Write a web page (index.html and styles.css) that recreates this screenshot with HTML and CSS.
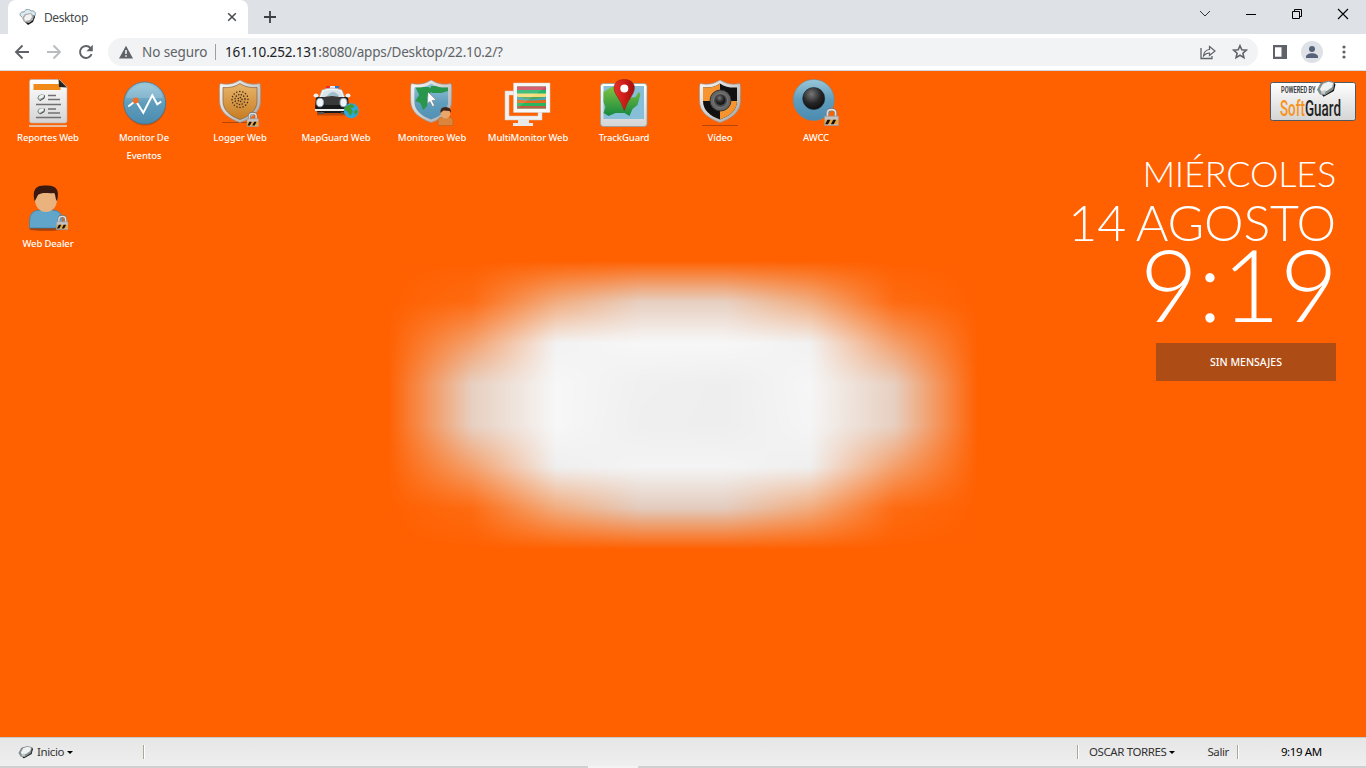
FILE: index.html
```html
<!DOCTYPE html>
<html lang="es">
<head>
<meta charset="utf-8">
<title>Desktop</title>
<link rel="stylesheet" href="styles.css">
</head>
<body>
<svg class="defs" width="0" height="0">
  <defs>
    <linearGradient id="steel" x1="0" y1="0" x2="1" y2="1"><stop offset="0" stop-color="#fafafa"/><stop offset=".5" stop-color="#cfcfcf"/><stop offset="1" stop-color="#a5a5a5"/></linearGradient>
    <linearGradient id="blue" x1="0" y1="0" x2="0" y2="1"><stop offset="0" stop-color="#9ac6d8"/><stop offset=".5" stop-color="#5f9dbc"/><stop offset="1" stop-color="#4b8bb0"/></linearGradient>
    <linearGradient id="amber" x1="0" y1="0" x2="0" y2="1"><stop offset="0" stop-color="#e8b56c"/><stop offset="1" stop-color="#c77c22"/></linearGradient>
    <linearGradient id="red" x1="0" y1="0" x2="1" y2="0"><stop offset="0" stop-color="#e5302a"/><stop offset=".5" stop-color="#cf1d18"/><stop offset="1" stop-color="#a00f0d"/></linearGradient>
    <linearGradient id="green" x1="0" y1="0" x2="0" y2="1"><stop offset="0" stop-color="#7dc142"/><stop offset="1" stop-color="#16893f"/></linearGradient>
    <linearGradient id="paper" x1="0" y1="0" x2="0" y2="1"><stop offset="0" stop-color="#fff"/><stop offset="1" stop-color="#d4d4d4"/></linearGradient>
    <radialGradient id="lens" cx=".4" cy=".3" r=".7"><stop offset="0" stop-color="#777"/><stop offset=".6" stop-color="#262626"/><stop offset="1" stop-color="#111"/></radialGradient>
    <clipPath id="inner"><path d="M30 5.500C25 9 19 10 13 9.500V23c0 9 7 15 17 18.500C40 38 47 32 47 23V9.500C41 10 35 9 30 5.500Z"/></clipPath>
    <symbol id="shield" viewBox="0 0 60 50">
      <path d="M30 2C24 6 17 7 10.500 5.500 9 6 9.500 15 9.500 23c0 11 9 17.500 20.500 21.500C41.500 40.500 50.500 34 50.500 23c0-8 .5-17-1-17.500C43 7 36 6 30 2Z" fill="url(#steel)" stroke="#929292" stroke-width=".7"/>
    </symbol>
    <symbol id="lock" viewBox="0 0 13 16">
      <path d="M3 8V4.500C3 .5 10 .5 10 4.500V8" fill="none" stroke="#777" stroke-width="2.700"/><path d="M3 8V4.500C3 1 10 1 10 4.500V8" fill="none" stroke="#ddd" stroke-width="1.500"/>
      <path d="M.5 7.500h12v8H.5z" fill="#c4c4c4" stroke="#999" stroke-width=".6"/><path d="M1 10.500h11v4H1z" fill="#e7a43c"/><path d="m1 14.500 2-4h2.500l-2 4Zm5 0 2-4h2.500l-2 4Z" fill="#111"/>
    </symbol>
    <symbol id="gem" viewBox="0 0 16 14">
      <path d="M4.500 12 6 13.800 14.500 9 15.800 4 15 2Z" fill="#111"/><path d="m.5 8 3-5.500L10 .5l5 1.500-1 6-7 4.500-4-.5Z" fill="#848f8f"/><path d="m3 7.500 2.500-4.500L10 1.500l4 1-1 3.500L8.500 9 4 9.500Z" fill="#eef2f1"/><path d="m4 9 4-.5-1 3-3-.3Z" fill="#c5cdcc"/>
    </symbol>
  </defs>
</svg>

<header class="browser">
  <div class="tabs">
    <div class="tab">
      <svg class="favicon" width="18" height="17" viewBox="0 0 18 17"><path d="M3 8C-1 6 2 2 5 3c2-4 6-3 7-1 4-1 6 3 3 6" fill="#dce9ef" stroke="#839baa"/><path d="m6 13 3 3 5-3 2-5-1-2Z" fill="#151515"/><path d="m3 9 3-4 6-1 3 3-1 4-4 3-5-1Z" fill="#aaa"/><path d="m5 9 2-3 5-1 1 3-2 3-5 1Z" fill="#f2f2f2"/></svg>
      <span class="tab-title">Desktop</span>
      <svg class="tab-close" width="10" height="10" viewBox="0 0 10 10"><path d="m1.200 1.200 7.600 7.600m0-7.600L1.200 8.800" stroke="#45494d" stroke-width="1.500"/></svg>
    </div>
    <svg class="plus" width="12" height="12" viewBox="0 0 12 12"><path d="M6 0v12M0 6h12" stroke="#3c4043" stroke-width="1.800"/></svg>
    <div class="window-buttons">
      <svg width="12" height="12" viewBox="0 0 12 12"><path d="m1 3 5 5 5-5" fill="none" stroke="#333"/></svg>
      <svg width="12" height="12" viewBox="0 0 12 12"><path d="M1 6.500h10" stroke="#000"/></svg>
      <svg width="12" height="12" viewBox="0 0 12 12"><path d="M1.500 3.500h7v7h-7zM3.500 3V1.500h7v7H9" fill="none" stroke="#000"/></svg>
      <svg width="12" height="12" viewBox="0 0 12 12"><path d="m1 1 10 10M11 1 1 11" stroke="#000" stroke-width="1.100"/></svg>
    </div>
  </div>
  <div class="toolbar">
    <div class="nav">
      <svg width="16" height="16" viewBox="0 0 16 16"><path d="M15 8H2m6.500-6.500L2 8l6.500 6.500" fill="none" stroke="#5f6368" stroke-width="1.900"/></svg>
      <svg width="16" height="16" viewBox="0 0 16 16"><path d="M1 8h13M7.500 1.500 14 8l-6.500 6.500" fill="none" stroke="#babcbe" stroke-width="1.900"/></svg>
      <svg width="16" height="16" viewBox="0 0 16 16"><path d="M13.600 10.200A6 6 0 1 1 12.500 4" fill="none" stroke="#5f6368" stroke-width="1.900"/><path d="M14.800.8v6.500H8.400Z" fill="#5f6368"/></svg>
    </div>
    <div class="omnibox">
      <svg width="14" height="14" viewBox="0 0 14 14"><path d="M7 .8 14 13.500H0Z" fill="#5f6368"/><path d="M6.200 5h1.600v4H6.200zm0 5.200h1.600v1.600H6.200z" fill="#f1f3f4"/></svg>
      <span class="warn">No seguro</span><i class="bar"></i>
      <span class="url">161.10.252.131<span class="path">:8080/apps/Desktop/22.10.2/?</span></span>
      <svg class="share" width="16" height="15" viewBox="0 0 16 15"><path d="M1 3v10.500h11V11" fill="none" stroke="#5f6368" stroke-width="1.300"/><path d="M9.500 1.500 15 6l-5.500 4.500V8C6.500 8 5 9 3.500 11c.3-3.500 2-6 6-6.500Z" fill="none" stroke="#5f6368" stroke-width="1.200"/></svg>
      <svg width="16" height="16" viewBox="0 0 16 16"><path d="m8 1.700 1.800 4.100 4.500.4-3.400 3 1 4.400L8 11.300l-3.900 2.300 1-4.400-3.400-3 4.500-.4Z" fill="none" stroke="#5f6368" stroke-width="1.600"/></svg>
    </div>
    <svg class="panel" width="14" height="14" viewBox="0 0 14 14"><path d="M0 0h14v14H0z" fill="#5f6368"/><path d="M2 2.300h6.500v9.400H2z" fill="#fff"/></svg>
    <svg class="avatar" width="22" height="22" viewBox="0 0 22 22"><circle cx="11" cy="11" r="11" fill="#dee1e6"/><circle cx="11" cy="8" r="3" fill="#56617a"/><path d="M5 16c0-5 12-5 12 0v1H5Z" fill="#56617a"/></svg>
    <svg width="4" height="14" viewBox="0 0 4 14"><g fill="#5f6368"><circle cx="2" cy="2" r="1.600"/><circle cx="2" cy="7" r="1.600"/><circle cx="2" cy="12" r="1.600"/></g></svg>
  </div>
</header>

<main class="desktop">
  <canvas class="wallpaper" id="wallpaper" width="592" height="290"></canvas>
  <section class="shortcuts">
    <div class="shortcut">
      <svg width="60" height="50" viewBox="0 0 60 50"><path d="M11 47h38v2H11z" fill="#ddd" opacity=".75"/><path d="M12.500 1.500h29L49 9v34q0 2-2 2H13.500q-2 0-2-2V3.500q0-2 2-2Z" fill="url(#paper)" stroke="#b3b3b3" stroke-width=".6"/><path d="M15.500 6h27v6h-27z" fill="#f28a19"/><path d="M40.500 1 49 9.500 41 9Z" fill="#222"/><path d="M18 26.500h25M18 39.500h25M30 17.500h8M30 21.500h12M30 31h8M30 35h12" stroke="#707070" stroke-width="1.500"/><use href="#gem" x="19" y="16" width="8" height="7"/><use href="#gem" x="19" y="29.500" width="8" height="7"/></svg>
      <span>Reportes Web</span>
    </div>
    <div class="shortcut">
      <svg width="60" height="50" viewBox="0 0 60 50"><circle cx="31" cy="26.500" r="21" fill="#8b4517" opacity=".5"/><circle cx="30.700" cy="25" r="21" fill="url(#blue)" stroke="#3a7799" stroke-width=".7"/><path d="M12 20C16 2 45 2 49 20" fill="#b9dbe7" opacity=".3"/><path d="m14.300 28.500 7.400-5.700 7.600 12 9-17.500 5 9 4-2.800" fill="none" stroke="#fff" stroke-width="2"/><circle cx="21.700" cy="22.500" r="3" fill="#f16e22"/></svg>
      <span>Monitor De Eventos</span>
    </div>
    <div class="shortcut">
      <svg width="60" height="50" viewBox="0 0 60 50"><path d="M12 44.500h35" stroke="#7d3512" opacity=".6"/><use href="#shield" width="60" height="50"/><path d="M30 5.500C25 9 19 10 13 9.500V23c0 9 7 15 17 18.500C40 38 47 32 47 23V9.500C41 10 35 9 30 5.500Z" fill="url(#amber)" stroke="#80613f" stroke-width=".7"/><g fill="none" stroke="#46301a" stroke-linecap="round" stroke-width="1.500"><circle cx="30" cy="21.500" r="8" stroke-dasharray=".1 3"/><circle cx="30" cy="21.500" r="5" stroke-dasharray=".1 2.600"/><circle cx="30" cy="21.500" r="2" stroke-dasharray=".1 2.100"/></g><use href="#lock" x="36.500" y="33.500" width="12.500" height="15.500"/></svg>
      <span>Logger Web</span>
    </div>
    <div class="shortcut">
      <svg width="60" height="50" viewBox="0 0 60 50"><g transform="translate(1)"><path d="M10 36h31" stroke="#7d3512" stroke-width="3" opacity=".5"/><path d="M19 8h12v3H19z" fill="#f1f1f1"/><path d="M19 8h4v2.500h-4z" fill="#eb272b"/><path d="M28 8h4v2.500h-4z" fill="#2475cf"/><path d="m12 20 3-8q10-4 20 0l3 8Z" fill="#f5f5f5" stroke="#9ca4a9" stroke-width=".7"/><path d="m14 19 3-6q8-2 16 0l3 6Z" fill="#d8e5ea"/><path d="M20 18q6-8 12 0Z" fill="#9fbfcd"/><path d="M9 19h32l1 11-2 5H11l-3-5Z" fill="#191919"/><path d="M14 20q11-4 22 0l-3 7H18Z" fill="#383838"/><path d="M8 31h34v2H8z" fill="#eee"/><ellipse cx="13" cy="24.500" rx="3.500" ry="4.300" fill="#edf4fa" stroke="#97a5b3"/><ellipse cx="36.500" cy="24.500" rx="3.500" ry="4.300" fill="#edf4fa" stroke="#97a5b3"/><ellipse cx="9" cy="17.500" rx="2.500" ry="2" fill="#eee"/><ellipse cx="41" cy="17.500" rx="2.500" ry="2" fill="#eee"/><path d="M11 34h6v2h-6zm23 0h6v2h-6z" fill="#555"/></g><circle cx="45.300" cy="32.700" r="7.500" fill="#2da8dc"/><path d="m40 28 6-2 3 3-4 1 2 4-3 4-2-4-4-3Zm10 3 2 3-3 3-1-3Z" fill="#3f9a38"/></svg>
      <span>MapGuard Web</span>
    </div>
    <div class="shortcut">
      <svg width="60" height="50" viewBox="0 0 60 50"><use href="#shield" x="-.8" width="60" height="50"/><g transform="translate(-.8)"><g clip-path="url(#inner)"><path d="M10 3h40v45H10z" fill="url(#blue)"/><path d="m14 9 14 0 2 5-4 5v9l-4 4-3-7-5-2 4-6Zm16-1h17v5l-7 2-9 0-3-3Z" fill="#28964b"/></g></g><path d="m26 14 8 8-4 .5 2.500 5-2 1-2.500-5-2.500 2Z" fill="#fff" stroke="#777" stroke-width=".5"/><path d="M36 47.500V43q0-4 5-4h5q5 0 5 4v4.500Z" fill="#da843c" stroke="#b15d24" stroke-width=".5"/><ellipse cx="43.500" cy="35" rx="5" ry="5.500" fill="#eaa56b"/><path d="M38.500 35q-1-6 5-6t5.500 6l-1.500-2-6-.5Z" fill="#41251b"/></svg>
      <span>Monitoreo Web</span>
    </div>
    <div class="shortcut">
      <svg width="60" height="50" viewBox="0 0 60 50"><path d="M7 13h37v29H7zM11 17v21h29V17Z" fill="#f1f1f1" fill-rule="evenodd" stroke="#cfcfcf" stroke-width=".5"/><path d="M20 42h11v3h4v3H15v-3h5Z" fill="#e9e9e9"/><path d="M15.500 5H52v29.500H15.500z" fill="#f7f7f7" stroke="#cfcfcf" stroke-width=".5"/><path d="M19 8.500h29v22H19z" fill="#51a65e"/><path d="M19 8.500h29v4H19z" fill="#ce4b5f"/><path d="M19 12h29v4H19z" fill="#27b56d"/><path d="M19 15.500h29V19H19z" fill="#f5db76"/><path d="M19 18.500q14 6 29 0V23H19Z" fill="#42aabc"/><path d="M19 21.500q14 2 29 0v4H19Z" fill="#dd6e24"/><path d="M19 25h29v3H19z" fill="#2ab65e"/><path d="M19 28h29v2.500H19z" fill="#b66045"/><path d="M19 8.500h29L19 30.500Z" fill="#fff" opacity=".12"/></svg>
      <span>MultiMonitor Web</span>
    </div>
    <div class="shortcut">
      <svg width="60" height="50" viewBox="0 0 60 50"><rect x="6.500" y="5.500" width="46.500" height="43" rx="3" fill="url(#paper)" stroke="#919ea1" stroke-width=".8"/><path d="M9.500 8h40.500v33H9.500z" fill="#86bfd7"/><path d="m9.500 14 8-5h6l5 5 6 6 7-1 3-5 2 2-3 11-5 4-3 7-5-3-9 0-7 3-5-3 2-6-2-5Z" fill="url(#green)"/><path d="M30.300 32.500Q28 25 23 18C16 7 23 1.500 30.300 1.500S44.500 7 37.500 18Q32.500 25 30.300 32.500Z" fill="url(#red)" stroke="#94211a" stroke-width=".6"/><circle cx="30.300" cy="10.500" r="4" fill="#fff"/></svg>
      <span>TrackGuard</span>
    </div>
    <div class="shortcut">
      <svg width="60" height="50" viewBox="0 0 60 50"><path d="M12 47.500h36" stroke="#8a3010" opacity=".6"/><use href="#shield" y="0" width="60" height="50"/><g clip-path="url(#inner)"><path d="M11 3h39v42H11z" fill="#111"/><path d="M11 3h19v20H11zm19 20h20v22H30z" fill="#f6942f"/></g><circle cx="30.500" cy="22.500" r="10.500" fill="#666" stroke="#333"/><circle cx="30.500" cy="22.500" r="7" fill="#494949" stroke="#888" stroke-width=".7"/><circle cx="30.500" cy="22" r="5" fill="url(#lens)"/></svg>
      <span>Vídeo</span>
    </div>
    <div class="shortcut">
      <svg width="60" height="50" viewBox="0 0 60 50"><circle cx="27.700" cy="22" r="20.500" fill="url(#blue)" stroke="#4d93b8" stroke-width=".5"/><circle cx="27.700" cy="20.500" r="11" fill="url(#lens)" stroke="#1b2a31" stroke-width=".6"/><use href="#lock" x="38" y="29.500" width="15" height="18.500"/></svg>
      <span>AWCC</span>
    </div>
    <div class="shortcut">
      <svg width="60" height="50" viewBox="0 0 60 50"><ellipse cx="28" cy="45" rx="17" ry="1.800" fill="#7d3512" opacity=".7"/><path d="M11.500 44V37q0-11 11-11h11q11 0 11 11v7Z" fill="#62a5cb" stroke="#377fa5" stroke-width=".7"/><ellipse cx="28" cy="16" rx="11" ry="12" fill="#eab27d"/><path d="M16.500 17C14 5 18 1 28 1.500c10-.5 14 4 11 15.500-2-2-1-6-3-8-5 1-10-1-14 1-3 0-3 5-5.500 7Z" fill="#3a1a10"/><use href="#lock" x="38" y="30.500" width="12.500" height="15.500"/></svg>
      <span>Web Dealer</span>
    </div>
  </section>

  <aside class="side">
    <svg class="logo" width="88" height="42" viewBox="0 0 88 42"><rect x="1.500" y="3.500" width="85" height="38" rx="2" fill="url(#paper)" stroke="#505861"/><g font-family="Roboto, sans-serif"><text transform="translate(12 14) scale(.63 1)" font-size="9" font-weight="700" fill="#444">POWERED BY</text><text transform="translate(11 36.500) scale(.61 1)" font-size="22" font-weight="500" fill="#222"><tspan fill="#f7931e">Soft</tspan>Guard</text></g><use href="#gem" x="47" y="1" width="20" height="17"/></svg>
    <div class="day">MIÉRCOLES</div>
    <div class="date">14 AGOSTO</div>
    <div class="time">9:19</div>
    <div class="messages">SIN MENSAJES</div>
  </aside>
</main>

<footer class="taskbar">
  <div class="start"><svg width="15" height="14" viewBox="0 0 16 14"><use href="#gem" width="16" height="14"/></svg><span class="start-label">Inicio</span><i class="caret"></i></div>
  <i class="sep"></i>
  <div class="session"><i class="sep"></i><span class="user">OSCAR TORRES</span><i class="caret"></i><span class="exit">Salir</span><i class="sep"></i><span class="clock">9:19 AM</span></div>
</footer>
<div class="bottom-strip"><i></i></div>
<script src="script.js"></script>
</body>
</html>
```
FILE: styles.css
```css
* { box-sizing: border-box; }
body { margin: 0; width: 1366px; height: 768px; overflow: hidden; display: flex; flex-direction: column; background: #ff6000; font-family: "Noto Sans", sans-serif; }
svg { display: block; flex: none; }
.defs { position: absolute; }
.browser { height: 71px; flex: none; background: #fff; border-bottom: 1px solid #d6dade; }
.tabs { height: 34px; background: #dee1e6; display: flex; align-items: center; padding-left: 8px; }
.tab { width: 240px; height: 34px; background: #fff; border-radius: 8px 8px 0 0; display: flex; align-items: center; padding: 0 11px; }
.tab-title { margin-left: 7px; font-size: 12px; color: #45494d; letter-spacing: -.4px; }
.tab-close { margin-left: auto; }
.plus { margin-left: 16px; }
.window-buttons { margin-left: auto; display: flex; gap: 34px; padding: 0 17px 6px 0; }
.toolbar { height: 36px; display: flex; align-items: center; padding-right: 20px; }
.nav { display: flex; flex: none; gap: 16px; padding-left: 14px; width: 108px; }
.omnibox { width: 1150px; flex: none; height: 28px; border-radius: 14px; background: #f1f3f4; display: flex; align-items: center; padding: 0 10px 0 11px; font-size: 14px; }
.warn { color: #5f6368; margin-left: 9px; width: 65px; white-space: nowrap; font-size: 13.500px; letter-spacing: -.1px; }
.bar { width: 1px; height: 16px; background: #9aa0a6; margin: 0 9px 0 8px; }
.url { color: #202124; white-space: nowrap; font-size: 13.500px; letter-spacing: -.18px; }
.path { color: #5f6368; }
.share { margin: 0 16px 0 auto; }
.panel { margin-left: 15px; }
.avatar { margin: 0 19px 0 14px; }
.desktop { flex: 1; position: relative; display: flex; justify-content: space-between; }
.wallpaper { position: absolute; left: 387px; top: 189px; }
.shortcuts { display: grid; grid-template-columns: repeat(9, 96px); grid-auto-rows: 106px; padding-top: 7px; }
.shortcut { display: flex; flex-direction: column; align-items: center; gap: 1px; color: #fff; font: 500 9.500px/18px "Noto Sans", sans-serif; text-align: center; letter-spacing: -.14px; }
.shortcut span { max-width: 84px; padding: 0 1px; }
.shortcut:nth-child(2) span { max-width: 70px; }
.side { width: 320px; display: flex; flex-direction: column; align-items: flex-end; padding: 8px 30px 0 0; color: #fff; font-family: Lato, sans-serif; font-weight: 300; white-space: nowrap; }
.logo { margin-right: -21px; }
.day { font-size: 36px; line-height: 44px; margin-top: 30px; letter-spacing: -.2px; }
.date { font-size: 50px; line-height: 50px; margin-top: 2px; letter-spacing: -.2px; word-spacing: -2px; }
.time { font-size: 100px; line-height: 88px; margin: -8px -2px 0 0; }
.messages { width: 180px; height: 38px; margin-top: 16px; background: #ae4c15; font: 500 10.500px/38px "Noto Sans", sans-serif; text-align: center; letter-spacing: 0; }
.taskbar { height: 29px; flex: none; border-top: 1px solid #c7c7c7; background: linear-gradient(#e6e6e6, #efefef); display: flex; align-items: center; font-size: 11.500px; line-height: 16px; color: #333; letter-spacing: -.4px; }
.taskbar span { padding-bottom: 1px; }
.start { display: flex; align-items: center; width: 143px; padding-left: 18px; }
.start-label { margin-left: 4px; }
.caret { border: 3px solid transparent; border-top-color: #000; border-bottom: 0; margin-left: 3px; }
.sep { width: 2px; height: 14px; border-left: 1px solid #aaa89b; border-right: 1px solid #fff; }
.session { margin-left: auto; display: flex; align-items: center; width: 289px; white-space: nowrap; }
.user { margin-left: 10px; }
.exit { margin: 0 8px 0 32px; }
.clock { margin-left: 42px; color: #000; }
.bottom-strip { height: 2px; flex: none; background: #d0d0d0; }
.bottom-strip i { display: block; width: 50px; height: 2px; background: #f3f3f3; margin-left: 588px; }
```
FILE: script.js
```js
// Bilinear glow built from an 8 by 8 grid of colour nodes.
const o = [255, 96, 0], f = [254, 107, 18], m = [242, 172, 126], e = [231, 207, 192], s = [244, 160, 108];
const g = (v) => [v, v, v];
const nodes = [
  [o, o, o, o, o, o, o, o],
  [o, f, m, e, e, m, f, o],
  [o, s, g(242), g(247), g(247), g(241), s, o],
  [o, e, g(247), g(240), g(238), g(246), e, o],
  [o, e, g(247), g(239), g(238), g(245), e, o],
  [o, s, g(239), g(244), g(244), g(239), s, o],
  [o, f, m, [227, 203, 189], [227, 203, 189], m, f, o],
  [o, o, o, o, o, o, o, o]
];
const canvas = document.getElementById('wallpaper');
const ctx = canvas.getContext('2d');
const w = canvas.width, h = canvas.height;
const image = ctx.createImageData(w, h);
for (let y = 0; y < h; y++) {
  const gy = y / (h - 1) * 6.999, r = Math.floor(gy), v = gy - r;
  for (let x = 0; x < w; x++) {
    const gx = x / (w - 1) * 6.999, c = Math.floor(gx), u = gx - c;
    const p = (y * w + x) * 4;
    for (let k = 0; k < 3; k++) {
      image.data[p + k] = (nodes[r][c][k] * (1 - u) + nodes[r][c + 1][k] * u) * (1 - v)
        + (nodes[r + 1][c][k] * (1 - u) + nodes[r + 1][c + 1][k] * u) * v;
    }
    image.data[p + 3] = 255;
  }
}
ctx.putImageData(image, 0, 0);
```
